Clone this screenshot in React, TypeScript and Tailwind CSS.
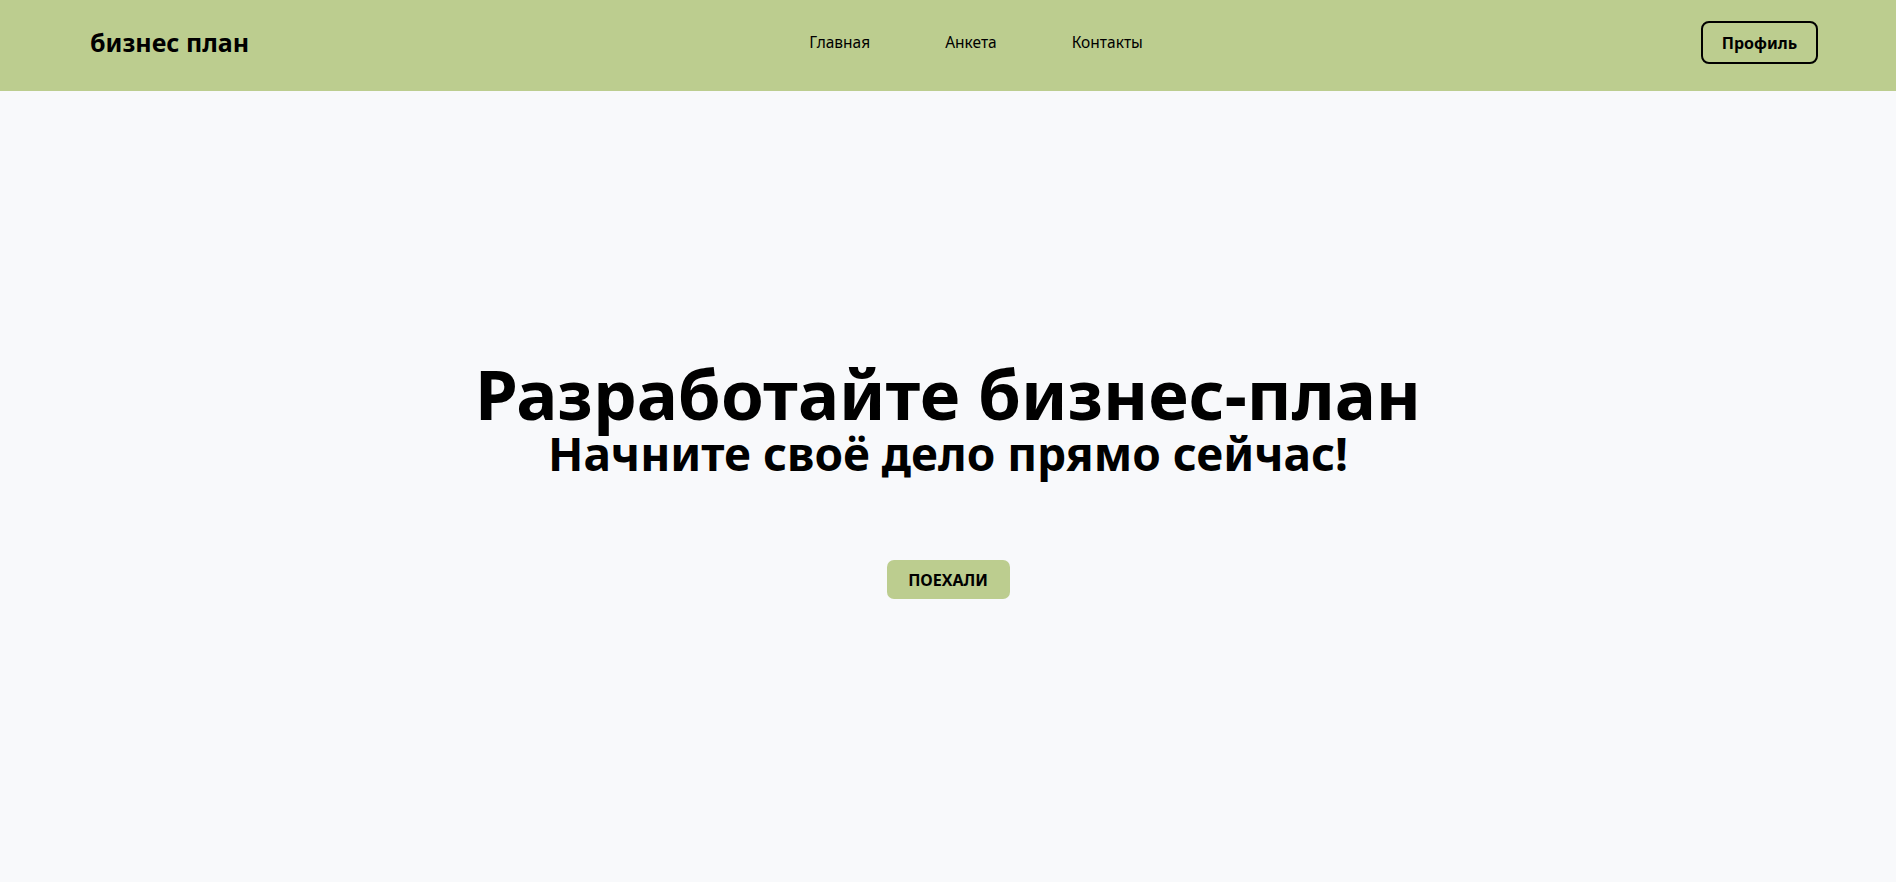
import React from "react";

const navLinks = ["Главная", "Анкета", "Контакты"];

export default function App() {
    return (
        <div
            className="min-h-screen flex flex-col bg-[#f8f9fb] text-black"
            style={{ fontFamily: '"Noto Sans", "Open Sans", sans-serif' }}
        >
            <header className="h-[91px] bg-[#bccd8f] flex items-center justify-between pl-[90px] pr-[78px] pb-[6px]">
                <div className="text-[25px] font-bold leading-none">бизнес план</div>

                <nav className="flex items-center gap-[75px] text-[15.5px] pl-[2px]">
                    {navLinks.map((link) => (
                        <a key={link} href="#" className="leading-none">
                            {link}
                        </a>
                    ))}
                </nav>

                <button className="w-[117px] h-[43px] border-2 border-black rounded-[8px] text-[16px] font-bold">
                    Профиль
                </button>
            </header>

            <main className="flex-1 flex flex-col items-center justify-center text-center pb-[17px]">
                <h1 className="text-[69px] font-bold leading-[1.05]">Разработайте бизнес-план</h1>
                <h2 className="text-[46px] font-bold leading-[1.05]">Начните своё дело прямо сейчас!</h2>

                <button className="mt-[83px] w-[123px] h-[39px] bg-[#bccd8f] rounded-[7px] text-[16px] font-bold">
                    ПОЕХАЛИ
                </button>
            </main>
        </div>
    );
}
